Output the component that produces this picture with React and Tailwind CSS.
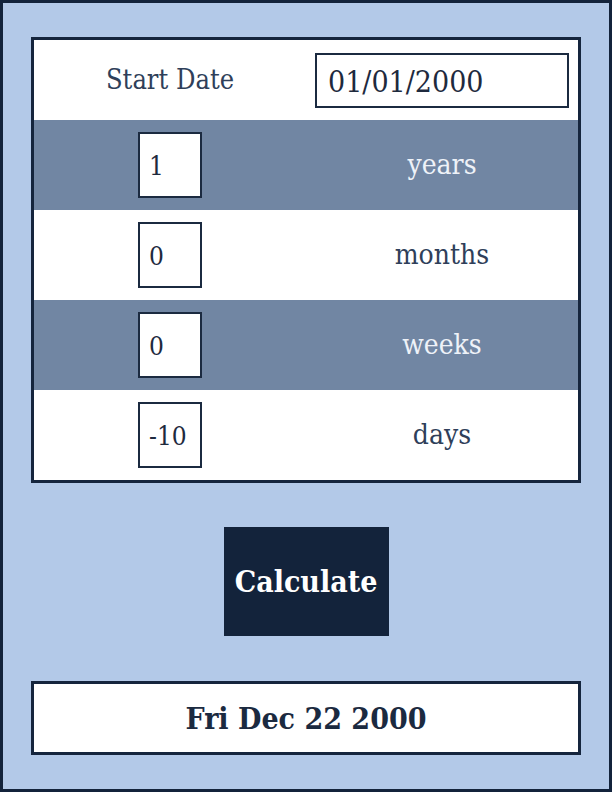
import { useState } from 'react';

const offsetFields = [
  { name: 'years', shaded: true },
  { name: 'months', shaded: false },
  { name: 'weeks', shaded: true },
  { name: 'days', shaded: false },
];

// Parse mm/dd/yyyy and shift it by the given amounts
const addOffset = (start, offset) => {
  const [mm, dd, yyyy] = start.split('/').map(Number);
  if (!mm || !dd || !yyyy) return 'Invalid Date';
  const date = new Date(yyyy, mm - 1, dd);
  date.setFullYear(date.getFullYear() + (parseInt(offset.years, 10) || 0));
  date.setMonth(date.getMonth() + (parseInt(offset.months, 10) || 0));
  date.setDate(
    date.getDate() +
      (parseInt(offset.weeks, 10) || 0) * 7 +
      (parseInt(offset.days, 10) || 0)
  );
  return date.toDateString();
};

const App = () => {
  const [startDate, setStartDate] = useState('01/01/2000');
  const [offset, setOffset] = useState({
    years: '1',
    months: '0',
    weeks: '0',
    days: '-10',
  });
  const [result, setResult] = useState(() =>
    addOffset('01/01/2000', { years: '1', months: '0', weeks: '0', days: '-10' })
  );

  const handleChange = (e) => {
    const { name, value } = e.target;
    setOffset((prev) => ({ ...prev, [name]: value }));
  };

  return (
    <div className="flex h-[792px] w-full flex-col border-[3px] border-[#13233b] bg-[#b3c9e8] px-[28px] pt-[34px] font-['DejaVu_Serif',Georgia,serif] font-stretch-condensed">
      <div className="border-[3px] border-[#15253d] bg-white">
        <div className="grid h-[80px] grid-cols-2 items-center">
          <div className="text-center text-[27px] text-[#2f3f5a]">Start Date</div>
          <div className="flex justify-center">
            <input
              type="text"
              value={startDate}
              onChange={(e) => setStartDate(e.target.value)}
              className="h-[55px] w-[254px] border-2 border-[#1b2a40] bg-white pl-[11px] pt-[3px] text-[30px] text-[#1e2a3e] outline-none"
            />
          </div>
        </div>
        {offsetFields.map((field) => (
          <div
            key={field.name}
            className={`grid h-[90px] grid-cols-2 items-center ${
              field.shaded ? 'bg-[#7186a3]' : 'bg-white'
            }`}
          >
            <div className="flex justify-center">
              <input
                type="text"
                name={field.name}
                value={offset[field.name]}
                onChange={handleChange}
                className="h-[66px] w-[64px] border-2 border-[#1b2a40] bg-white pl-[9px] pt-[2px] text-[26px] text-[#1e2a3e] outline-none"
              />
            </div>
            <div
              className={`text-center text-[28px] ${
                field.shaded ? 'text-[#eef2f8]' : 'text-[#2f3f5a]'
              }`}
            >
              {field.name}
            </div>
          </div>
        ))}
      </div>

      <button
        onClick={() => setResult(addOffset(startDate, offset))}
        className="mt-[44px] h-[109px] w-[165px] self-center bg-[#13233b] text-[30px] font-bold text-white"
      >
        Calculate
      </button>

      <div className="mt-[45px] flex h-[74px] items-center justify-center border-[3px] border-[#15253d] bg-white text-[30px] font-bold text-[#1b2a40]">
        {result}
      </div>
    </div>
  );
};

export default App;
